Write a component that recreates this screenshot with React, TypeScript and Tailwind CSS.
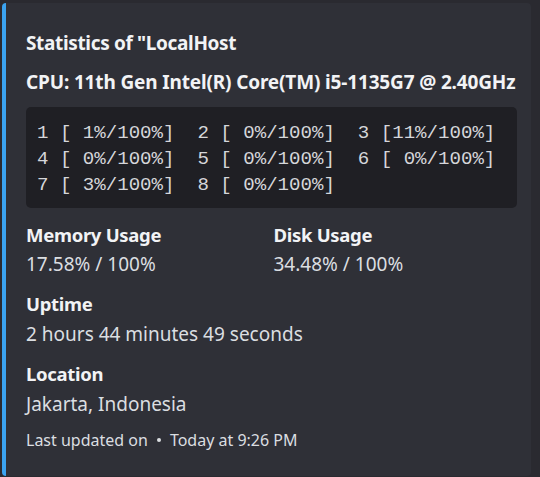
import React from "react";

export default function App() {
  const sans = { fontFamily: '"Noto Sans", "Open Sans", sans-serif' };
  return (
    <div className="w-[540px] h-[477px] bg-[#2a2a30] pt-[3px] pl-[2px] pr-[9px] overflow-hidden" style={sans}>
      <div className="h-[473px] bg-[#2f3037] border-l-[4px] border-[#3ba3f0] rounded-[4px] pl-[20px] pr-[14px] pt-[28px]">
        <div className="text-[19px] leading-[24px] font-bold text-[#f2f3f5] tracking-[-0.35px]">Statistics of "LocalHost</div>
        <div className="mt-[15px] text-[19px] leading-[24px] font-bold text-[#f2f3f5] tracking-[-0.15px]">
          CPU: 11th Gen Intel(R) Core(TM) i5-1135G7 @ 2.40GHz
        </div>
        <pre
          className="mt-[13px] bg-[#1f1f24] rounded-[5px] px-[11px] pt-[13px] pb-[10px] text-[19.1px] leading-[26px] text-[#d5d6da]"
          style={{ fontFamily: '"Liberation Mono", "DejaVu Sans Mono", monospace' }}
        >
{`1 [ 1%/100%]  2 [ 0%/100%]  3 [11%/100%]
4 [ 0%/100%]  5 [ 0%/100%]  6 [ 0%/100%]
7 [ 3%/100%]  8 [ 0%/100%]`}
        </pre>
        <div className="mt-[15px] grid grid-cols-2">
          <div>
            <div className="text-[18.5px] leading-[24px] font-bold text-[#f2f3f5] tracking-[-0.3px]">Memory Usage</div>
            <div className="mt-[5px] text-[19px] leading-[24px] text-[#dbdee1]">17.58% / 100%</div>
          </div>
          <div className="pl-[2px]">
            <div className="text-[18.5px] leading-[24px] font-bold text-[#f2f3f5] tracking-[-0.3px]">Disk Usage</div>
            <div className="mt-[5px] text-[19px] leading-[24px] text-[#dbdee1]">34.48% / 100%</div>
          </div>
        </div>
        <div className="mt-[16px] text-[18.5px] leading-[24px] font-bold text-[#f2f3f5] tracking-[-0.3px]">Uptime</div>
        <div className="mt-[6px] text-[19px] leading-[24px] text-[#dbdee1]">2 hours 44 minutes 49 seconds</div>
        <div className="mt-[16px] text-[18.5px] leading-[24px] font-bold text-[#f2f3f5] tracking-[-0.3px]">Location</div>
        <div className="mt-[6px] text-[19px] leading-[24px] text-[#dbdee1]">Jakarta, Indonesia</div>
        <div className="mt-[14px] flex items-center text-[16px] leading-[20px] text-[#dbdee1]">
          <span>Last updated on</span>
          <span className="mx-[9px] w-[4px] h-[4px] rounded-full bg-[#dbdee1]" />
          <span>Today at 9:26 PM</span>
        </div>
      </div>
    </div>
  );
}
